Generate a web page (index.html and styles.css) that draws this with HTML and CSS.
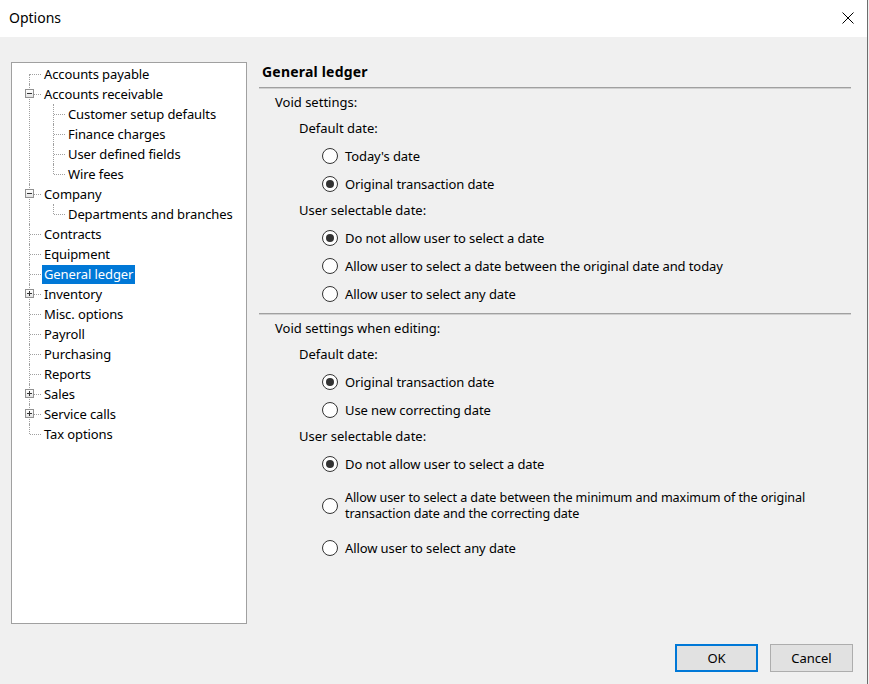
FILE: index.html
```html
<!DOCTYPE html>
<html>
<head>
<meta charset="utf-8">
<title>Options</title>
<link rel="stylesheet" href="styles.css">
</head>
<body>

<div class="window">

<div class="titlebar">
	<span class="title">Options</span>
	<svg class="close" width="12" height="12" viewBox="0 0 12 12">
		<path d="M0.5 0.5 L11.5 11.5 M11.5 0.5 L0.5 11.5" stroke="#000" stroke-width="1" fill="none" />
	</svg>
</div>

<div class="content">
<div class="main">

<div class="tree">
<ul class="root">
<li><span class="label">Accounts payable</span></li>
<li><span class="toggle minus"></span><span class="label">Accounts receivable</span>
	<ul>
	<li><span class="label">Customer setup defaults</span></li>
	<li><span class="label">Finance charges</span></li>
	<li><span class="label">User defined fields</span></li>
	<li><span class="label">Wire fees</span></li>
	</ul>
</li>
<li><span class="toggle minus"></span><span class="label">Company</span>
	<ul>
	<li><span class="label">Departments and branches</span></li>
	</ul>
</li>
<li><span class="label">Contracts</span></li>
<li><span class="label">Equipment</span></li>
<li><span class="label selected">General ledger</span></li>
<li><span class="toggle plus"></span><span class="label">Inventory</span></li>
<li><span class="label">Misc. options</span></li>
<li><span class="label">Payroll</span></li>
<li><span class="label">Purchasing</span></li>
<li><span class="label">Reports</span></li>
<li><span class="toggle plus"></span><span class="label">Sales</span></li>
<li><span class="toggle plus"></span><span class="label">Service calls</span></li>
<li><span class="label">Tax options</span></li>
</ul>
</div>

<div class="panel">
	<div class="heading">General ledger</div>

	<div class="group">Void settings:</div>
	<div class="sub">Default date:</div>
	<div class="option"><span class="radio"></span><span>Today's date</span></div>
	<div class="option"><span class="radio on"></span><span>Original transaction date</span></div>
	<div class="sub">User selectable date:</div>
	<div class="option"><span class="radio on"></span><span>Do not allow user to select a date</span></div>
	<div class="option"><span class="radio"></span><span>Allow user to select a date between the original date and today</span></div>
	<div class="option"><span class="radio"></span><span>Allow user to select any date</span></div>

	<div class="separator"></div>

	<div class="group">Void settings when editing:</div>
	<div class="sub">Default date:</div>
	<div class="option"><span class="radio on"></span><span>Original transaction date</span></div>
	<div class="option"><span class="radio"></span><span>Use new correcting date</span></div>
	<div class="sub">User selectable date:</div>
	<div class="option"><span class="radio on"></span><span>Do not allow user to select a date</span></div>
	<div class="option tall"><span class="radio"></span>
		<div class="wrap">
			<div>Allow user to select a date between the minimum and maximum of the original</div>
			<div>transaction date and the correcting date</div>
		</div>
	</div>
	<div class="option"><span class="radio"></span><span>Allow user to select any date</span></div>
</div>

</div>

<div class="footer">
	<button class="btn default">OK</button>
	<button class="btn">Cancel</button>
</div>
</div>

</div>

</body>
</html>
```

FILE: styles.css
```css
html, body {
	margin: 0;
	padding: 0;
	background-color: #f0f0f0;
}
body {
	font-family: "Noto Sans", "Open Sans", sans-serif;
	font-size: 13px;
	color: #000;
}
.window {
	width: 867px;
	height: 684px;
	border-right: 1px solid #6d6d6d;
	background-color: #f0f0f0;
}
.titlebar {
	height: 37px;
	background-color: #fff;
	display: flex;
	align-items: center;
	justify-content: space-between;
	padding: 0 13px 0 9px;
	box-sizing: border-box;
}
.title {
	font-size: 14px;
	margin-top: -2px;
}
.close {
	display: block;
	margin-top: -1px;
}
.main {
	display: flex;
	gap: 12px;
	padding: 25px 0 0 11px;
}
.tree {
	width: 236px;
	height: 562px;
	box-sizing: border-box;
	border: 1px solid #a0a0a0;
	background-color: #fff;
	padding-top: 1px;
}
.tree ul {
	list-style: none;
	margin: 0;
	padding: 0;
}
.tree ul ul {
	margin-left: -6px;
}
.tree li {
	position: relative;
	padding-left: 30px;
}
/* vertical connector */
.tree li::before {
	content: "";
	position: absolute;
	left: 17px;
	top: 0;
	bottom: 0;
	border-left: 1px dotted #a0a0a0;
}
.tree .root > li:first-child::before {
	top: 10px;
}
.tree li:last-child::before {
	bottom: auto;
	height: 10px;
}
/* horizontal connector */
.tree li::after {
	content: "";
	position: absolute;
	left: 18px;
	top: 10px;
	width: 11px;
	border-top: 1px dotted #a0a0a0;
}
.label {
	display: inline-block;
	height: 20px;
	line-height: 20px;
	padding: 0 2px;
	white-space: nowrap;
	letter-spacing: -0.1px;
}
.label.selected {
	background-color: #0078d7;
	color: #fff;
	height: 19px;
	line-height: 19px;
	margin-top: 1px;
	vertical-align: top;
}
.toggle {
	position: absolute;
	left: 13px;
	top: 5px;
	width: 7px;
	height: 7px;
	border: 1px solid #919191;
	background: linear-gradient(#fff, #e3e3e3);
	z-index: 1;
}
.toggle::before,
.toggle::after {
	content: "";
	position: absolute;
	background-color: #333;
}
.toggle::before {
	left: 1px;
	top: 3px;
	width: 5px;
	height: 1px;
}
.toggle.plus::after {
	left: 3px;
	top: 1px;
	width: 1px;
	height: 5px;
}
.panel {
	width: 592px;
}
.heading {
	font-weight: bold;
	font-size: 14px;
	letter-spacing: 0.2px;
	line-height: 20px;
	padding: 0 0 5px 3px;
	border-bottom: 1px solid #a0a0a0;
	box-shadow: 0 1px 0 #d0d0d0;
	margin-bottom: 1px;
}
.separator {
	margin-top: 6px;
	border-top: 1px solid #a0a0a0;
	box-shadow: 0 1px 0 #d0d0d0;
	margin-bottom: 1px;
}
.group {
	height: 26px;
	line-height: 26px;
	padding-left: 16px;
}
.sub {
	height: 26px;
	line-height: 26px;
	padding-left: 40px;
}
.option {
	height: 28px;
	display: flex;
	align-items: center;
	gap: 7px;
	padding-left: 63px;
	padding-top: 1px;
	box-sizing: border-box;
	white-space: nowrap;
	letter-spacing: -0.1px;
}
.option.tall {
	height: 56px;
}
.wrap {
	font-size: 12.6px;
	line-height: 16px;
}
.radio {
	width: 14px;
	height: 14px;
	border: 1px solid #333;
	border-radius: 50%;
	background-color: #fff;
	display: flex;
	align-items: center;
	justify-content: center;
	flex-shrink: 0;
}
.radio.on::after {
	content: "";
	width: 8px;
	height: 8px;
	border-radius: 50%;
	background-color: #333;
}
.footer {
	display: flex;
	justify-content: flex-end;
	gap: 12px;
	padding: 20px 14px 0 0;
}
.btn {
	width: 83px;
	height: 28px;
	box-sizing: border-box;
	border: 1px solid #adadad;
	background-color: #e1e1e1;
	font-family: "Noto Sans", "Open Sans", sans-serif;
	font-size: 13px;
	color: #000;
	padding: 0;
}
.btn.default {
	border: 2px solid #0078d7;
}
```
